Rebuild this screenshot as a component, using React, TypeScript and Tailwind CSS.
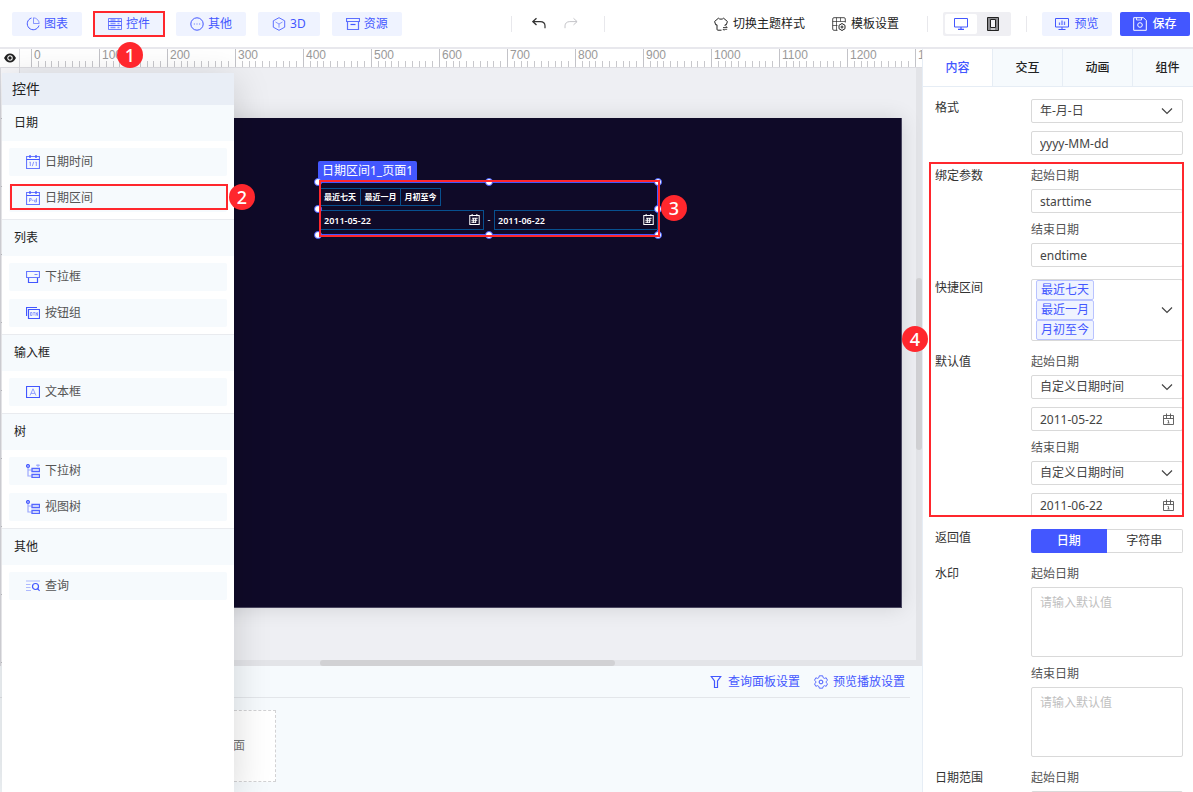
import React from 'react';
import clsx from 'clsx';

interface IconProps {
  className?: string;
}

interface WidgetItem {
  name: string;
  icon: React.FC<IconProps>;
  marker?: string;
}

interface WidgetGroup {
  title: string;
  items: WidgetItem[];
}

const Svg: React.FC<React.PropsWithChildren<IconProps>> = ({ className = 'size-3.5', children }) => (
  <svg viewBox="0 0 14 14" fill="none" stroke="currentColor" strokeWidth="1" className={clsx('shrink-0', className)} aria-hidden="true">
    {children}
  </svg>
);

/* ---------- toolbar icons ---------- */

const PieIcon = () => (
  <Svg>
    <path d="M5.5 1A6 6 0 1 0 13 8.5" />
    <path d="M7.5.8v5.7h5.7A5.9 5.9 0 0 0 7.5.8Z" opacity=".6" />
  </Svg>
);

const ControlsIcon = () => (
  <Svg>
    <path d="M.5 4.5v-3h13v3zM.5 8.5v-4h13v4zM.5 12.5v-4h13v4z" opacity=".75" />
    <path d="M2.5 3h5M2.5 6.5h5M2.5 10.5h5M9.5 3h2M9.5 6.5h2M9.5 10.5h2" strokeWidth="1.5" opacity=".6" />
  </Svg>
);

const MoreIcon = () => (
  <Svg>
    <circle cx="7" cy="7" r="6.2" />
    <path d="M3.8 7h1.2M6.4 7h1.2M9 7h1.2" opacity=".7" />
  </Svg>
);

const CubeIcon = () => (
  <Svg>
    <path d="M7 .7 12.7 3.8v6.4L7 13.3 1.3 10.2V3.8z" opacity=".85" />
    <path d="M3.5 5 7 7l3.5-2M7 7v3.7" opacity=".6" />
  </Svg>
);

const ArchiveIcon = () => (
  <Svg>
    <path d="M.5 1.5h13v3H.5zM1.500 4.500v8h11v-8" strokeWidth="1.200" opacity=".85" />
    <path d="M4.500 7.500h5" strokeWidth="1.200" />
  </Svg>
);

const UndoIcon = () => (
  <Svg>
    <path d="M4.500 1.300.9 4.600l3.600 3.300" strokeWidth="1.300" />
    <path d="M1 4.600h7.200c3 0 4.800 1.800 4.800 4.200v2.400" strokeWidth="1.200" />
  </Svg>
);

const RedoIcon = () => (
  <Svg>
    <path d="m9.500 1.300 3.600 3.300-3.600 3.300M13 4.600H5.800C2.800 4.600 1 6.400 1 8.800v2.400" />
  </Svg>
);

const ShirtIcon = () => (
  <Svg>
    <path d="M7.500 13.200H3.900a.9.900 0 0 1-.9-.9V7.800H1.700L.6 4.500 4.400 1.200c1 1.300 4.200 1.300 5.200 0l3.800 3.300-1.100 3.300H11v1" />
    <path d="M9 10.500h4.200l-1.200-1.300M13.200 12.300H9l1.200 1.300" opacity=".8" />
  </Svg>
);

const TemplateIcon = () => (
  <Svg>
    <path d="M5.500 13.300H2A1.300 1.300 0 0 1 .7 12V2A1.300 1.300 0 0 1 2 .7h10A1.300 1.300 0 0 1 13.300 2v3.500" opacity=".8" />
    <path d="M.7 4.500h12.600M.7 8.500h4.800M4.500.7v12.600M8.500.7v3.800" opacity=".65" />
    <path d="m10 6.500 3 1.800v3.400l-3 1.800-3-1.800V8.300z" />
    <circle cx="10" cy="10" r="1" />
  </Svg>
);

const MonitorIcon = () => (
  <Svg>
    <path d="M.5 1.500h13v8.500H.5z" />
    <path d="M7 10v2M4 12.300h6" strokeWidth="1.200" />
  </Svg>
);

const PhoneIcon = () => (
  <Svg>
    <path d="M1.500.5h11v13h-11z" fill="#8c8c90" />
    <path d="M4.500 2.500h5v8h-5z" fill="#f4f4f7" />
    <path d="M5 12h4" stroke="#fff" />
  </Svg>
);

const PreviewIcon = () => (
  <Svg>
    <path d="M.5 1.500h13v8.500H.5zM7 10v2M3.500 12.500h7" />
    <path d="M4.500 5.500V8M7 3.500V8M9.500 4.500V8" strokeWidth="1.300" opacity=".8" />
  </Svg>
);

const SaveIcon = () => (
  <Svg>
    <path d="M.7.7h9.800l2.800 2.800v9.800H.7z" />
    <path d="M3.500.7v2.300h5V.7" opacity=".8" />
    <circle cx="7" cy="8" r="2.300" />
  </Svg>
);

/* ---------- widget icons ---------- */

const CalendarBase: React.FC<React.PropsWithChildren> = ({ children }) => (
  <Svg>
    <path d="M.5 1.500h13v12H.5z" strokeWidth="1.200" opacity=".8" />
    <path d="M.5 4.500h13" />
    <path d="M4 0v3M10 0v3" strokeWidth="1.300" />
    {children}
  </Svg>
);

const DateTimeIcon = () => (
  <CalendarBase>
    <path d="M3.500 7.200 4.300 7v4M7.700 6.800l-1.400 4.400M9.500 7.200l.8-.2v4" opacity=".6" />
  </CalendarBase>
);

const DateRangeIcon = () => (
  <CalendarBase>
    <path d="M3.500 11V7.500h1.700v1.700H3.500M6 9.300h1.500M10.500 7v4H8.700V9h1.800" opacity=".55" />
  </CalendarBase>
);

const DropdownIcon = () => (
  <Svg>
    <path d="M.5 1.500h13v6H.5z" strokeWidth="1.200" opacity=".8" />
    <path d="M2.500 8v4.500h9V8" strokeWidth="1.200" />
    <path d="M8.500 4.500h3" opacity=".7" />
  </Svg>
);

const ButtonGroupIcon = () => (
  <Svg>
    <path d="M.5 10V1.500H11" strokeWidth="1.200" />
    <path d="M2.500 3.500h11v9h-11z" strokeWidth="1.200" />
    <path d="M4.500 6.500H6v3H4.500zM7.300 6.500H9M8 6.500v3M10 10V6.500l1.500 3V6.200" opacity=".5" />
  </Svg>
);

const TextBoxIcon = () => (
  <Svg>
    <path d="M.5 1.500h13v11H.5z" strokeWidth="1.200" />
    <path d="M4 10.500 7 3.800l3 6.700M5.200 8.400h3.600" opacity=".55" />
  </Svg>
);

const TreeShape = () => (
  <>
    <circle cx="2" cy="2" r="1.400" strokeWidth="1.300" />
    <path d="M2 3.500V12h3.500M2 6h3.500" strokeWidth="1.200" opacity=".5" />
    <path d="M6 4.500h7.500v3H6zM6 10.500h7.500v3H6z" strokeWidth="1.300" opacity=".9" />
  </>
);

const TreeIcon = () => (
  <Svg>
    <TreeShape />
  </Svg>
);

const DropTreeIcon = () => (
  <Svg>
    <TreeShape />
    <path d="M10.500 1h3L12 2.500z" opacity=".55" />
  </Svg>
);

const QueryIcon = () => (
  <Svg>
    <path d="M0 2h14M0 5.500h4.500M0 8.500h4.500M0 11.500h5" strokeWidth="1.200" opacity=".4" />
    <circle cx="9.500" cy="7.500" r="3" strokeWidth="1.200" />
    <path d="m11.600 9.700 2 2.200" strokeWidth="1.200" />
  </Svg>
);

const FilterIcon = () => (
  <Svg>
    <path d="M2.300 1.500h9.400L8.500 6v6.500h-3V6z" strokeWidth="1.200" />
  </Svg>
);

const GearIcon = () => (
  <Svg>
    <path d="m5.300.8-.4 1.800-1.300.8-1.800-.6L.5 5.300l1.300 1.100v1.400L.5 8.800l1.300 2.500 1.800-.6 1.300.8.400 1.700h3.400l.4-1.700 1.300-.8 1.800.6 1.300-2.500-1.300-1.100V6.400l1.300-1.100-1.300-2.500-1.800.6-1.300-.8L8.700.8z" opacity=".85" />
    <circle cx="7" cy="7" r="1.900" />
  </Svg>
);

const FieldCalendarIcon: React.FC<IconProps> = ({ className }) => (
  <Svg className={className}>
    <path d="M2.500 3.500h10v9h-10zM2.500 6.500h10M5.500 1.500v5M9.500 1.500v5" opacity=".9" />
    <path d="M6.500 8.500h1v2.500M6.500 11h2" opacity=".8" />
  </Svg>
);

const GridCalendarIcon: React.FC<IconProps> = ({ className }) => (
  <Svg className={className}>
    <path d="M1 2h12v11.300H1z" strokeWidth="1.300" />
    <path d="M4 0v3M10 0v3M4 5.500h7M3 8h7.500M3 10.500h5.500M5.500 5v6.500M8.500 5v6.500" strokeWidth="1.300" />
  </Svg>
);

const ChevronIcon: React.FC<IconProps> = ({ className }) => (
  <Svg className={className}>
    <path d="m2 4.500 5 5 5-5" strokeWidth="1.200" />
  </Svg>
);

const EyeIcon = () => (
  <Svg className="size-3">
    <path d="M0 7c2-3.600 4.300-5.200 7-5.200S12 3.400 14 7c-2 3.600-4.300 5.200-7 5.200S2 10.600 0 7Z" fill="currentColor" stroke="none" />
    <circle cx="7" cy="7" r="2.600" stroke="#fff" strokeWidth="1.200" />
  </Svg>
);

/* ---------- data ---------- */

const toolbar = [
  { name: '图表', icon: PieIcon },
  { name: '控件', icon: ControlsIcon, marker: '1' },
  { name: '其他', icon: MoreIcon },
  { name: '3D', icon: CubeIcon },
  { name: '资源', icon: ArchiveIcon },
];

const widgetGroups: WidgetGroup[] = [
  {
    title: '日期',
    items: [
      { name: '日期时间', icon: DateTimeIcon },
      { name: '日期区间', icon: DateRangeIcon, marker: '2' },
    ],
  },
  {
    title: '列表',
    items: [
      { name: '下拉框', icon: DropdownIcon },
      { name: '按钮组', icon: ButtonGroupIcon },
    ],
  },
  { title: '输入框', items: [{ name: '文本框', icon: TextBoxIcon }] },
  {
    title: '树',
    items: [
      { name: '下拉树', icon: DropTreeIcon },
      { name: '视图树', icon: TreeIcon },
    ],
  },
  { title: '其他', items: [{ name: '查询', icon: QueryIcon }] },
];

const quickRanges = ['最近七天', '最近一月', '月初至今'];
const rulerMarks = Array.from({ length: 14 }, (_, i) => i * 100);
const minorTicks = Array.from({ length: 9 }, (_, i) => Math.round((i + 1) * 6.8));

const handles = [
  '-left-1 -top-0.5',
  'left-1/2 -top-0.5 -translate-x-1/2',
  '-right-0.5 -top-0.5',
  '-left-1 top-1/2 -translate-y-1/2',
  '-right-0.5 top-1/2 -translate-y-1/2',
  '-left-1 -bottom-0.5',
  'left-1/2 -bottom-0.5 -translate-x-1/2',
  '-right-0.5 -bottom-0.5',
];

/* ---------- small parts ---------- */

const Marker: React.FC<{ value: string; className: string }> = ({ value, className }) => (
  <span className={clsx('absolute z-30 flex size-[26px] items-center justify-center rounded-full bg-[#ff272d] text-lg font-medium leading-none text-white', className)}>
    {value}
  </span>
);

const Divider = () => <span className="h-4 w-px bg-[#e8e8ec]" />;

const Toolbar = () => (
  <header className="relative z-20 flex h-[49px] shrink-0 items-center justify-between border-b-2 border-[#e8e8ed] bg-white pl-3 pr-[3px] pt-px">
    <nav className="flex gap-3">
      {toolbar.map(({ name, icon: Icon, marker }) => (
        <div key={name} className="relative">
          <button className="flex h-6 items-center gap-1 rounded-xs bg-[#eff3ff] px-3.5 text-[#4357ff]">
            <Icon />
            {name}
          </button>
          {marker && (
            <>
              <span className="pointer-events-none absolute -inset-px border-2 border-[#ff272d]" />
              <Marker value={marker} className="left-[23px] top-[30px]" />
            </>
          )}
        </div>
      ))}
    </nav>

    <div className="flex items-center">
      <Divider />
      <button aria-label="撤销" className="ml-5 text-[#333]"><UndoIcon /></button>
      <button aria-label="重做" className="ml-[18px] mr-[26px] text-[#c4c4c8]"><RedoIcon /></button>
      <Divider />
    </div>

    <div className="flex items-center">
      <button className="flex items-center gap-[5px] text-[#222]"><ShirtIcon />切换主题样式</button>
      <button className="ml-[27px] mr-7 flex items-center gap-[5px] text-[#222]"><TemplateIcon />模板设置</button>
      <Divider />
      <div className="mx-[15px] flex h-6 w-[68px] rounded-xs bg-[#efeff3] p-0.5">
        <button aria-label="桌面端" className="flex flex-1 items-center justify-center rounded-xs bg-white text-[#4357ff]"><MonitorIcon /></button>
        <button aria-label="移动端" className="flex flex-1 items-center justify-center text-[#222]"><PhoneIcon /></button>
      </div>
      <Divider />
      <button className="ml-[15px] flex h-6 w-[70px] items-center justify-center gap-[5px] rounded-xs bg-[#eff3ff] text-[#4357ff]"><PreviewIcon />预览</button>
      <button className="ml-2 flex h-6 w-[70px] items-center justify-center gap-[5px] rounded-xs bg-[#4357ff] font-medium text-white"><SaveIcon />保存</button>
    </div>
  </header>
);

const WidgetDrawer = () => (
  <aside className="absolute bottom-0 left-0.5 top-6 z-10 w-[232px] bg-white shadow-[0_8px_36px_rgba(0,0,0,0.16)]">
    <h2 className="flex h-8 items-center bg-[#e9eef6] px-2.5 text-sm text-[#222]">控件</h2>
    {widgetGroups.map((group, idx) => (
      <section key={group.title} className={clsx(idx > 0 && 'border-t border-[#e9ebef]')}>
        <h3 className="flex h-9 items-center bg-[#f6fafd] px-3 text-[#222]">{group.title}</h3>
        <ul className="flex flex-col gap-2 p-[7px]">
          {group.items.map(({ name, icon: Icon, marker }) => (
            <li key={name} className="relative">
              <button className="flex h-7 w-full items-center gap-[5px] rounded-xs bg-[#f6fafd] px-[17px] text-[#555]">
                <span className="text-[#4357ff]"><Icon /></span>
                {name}
              </button>
              {marker && (
                <>
                  <span className="pointer-events-none absolute -right-px bottom-0.5 left-px top-0 border-2 border-[#ff272d]" />
                  <Marker value={marker} className="-right-7 top-0" />
                </>
              )}
            </li>
          ))}
        </ul>
      </section>
    ))}
  </aside>
);

const HorizontalRuler = () => (
  <div className="flex h-[19px] shrink-0 border-b border-[#dcdce1] bg-white">
    <button aria-label="显示标尺" className="flex w-5 shrink-0 items-center justify-center border-r border-[#dcdce1] text-[#222]"><EyeIcon /></button>
    <div className="flex min-w-0 flex-1 overflow-hidden pl-[11px]">
      {rulerMarks.map((mark) => (
        <div key={mark} className="relative w-[68px] shrink-0 border-l border-[#c3c3c8]">
          <span className="block pl-0.5 font-['Liberation_Sans',sans-serif] leading-3 text-[#999]">{mark}</span>
          <svg className="absolute bottom-0 -left-px h-1.5 w-[68px]" shapeRendering="crispEdges" aria-hidden="true">
            {minorTicks.map((x) => <rect key={x} x={x} y="0" width="1" height="6" fill="#c8c8cc" />)}
          </svg>
        </div>
      ))}
    </div>
  </div>
);

const VerticalRuler = () => (
  <div className="w-5 shrink-0 overflow-hidden border-x border-[#dcdce1] bg-[#f7f7fa] pt-[50px]">
    {rulerMarks.slice(0, 12).map((mark) => (
      <div key={mark} className="h-[68px] border-t border-[#c3c3c8]" />
    ))}
  </div>
);

const CanvasDate: React.FC<{ label: string; value: string }> = ({ label, value }) => (
  <div className="relative min-w-0 flex-1">
    <input aria-label={label} defaultValue={value} className="block h-5 w-full border border-[#07508f] bg-transparent px-[3px] text-[9px] font-semibold text-white outline-none" />
    <GridCalendarIcon className="absolute right-1 top-1 size-[11px] text-white" />
  </div>
);

const RangeWidget = () => (
  <div className="absolute left-[286px] top-[43px] w-[342px]">
    <div className="flex h-[19px] w-fit items-center rounded-t-xs bg-[#4357ff] px-1 text-white">日期区间1_页面1</div>
    <div className="relative h-[57px] px-0.5 pt-2">
      <span className="absolute inset-px border-2 border-[#4357ff]" />
      <div className="relative flex w-fit border-y border-r border-[#07508f]">
        {quickRanges.map((range, i) => (
          <button key={range} className={clsx('h-4 w-10 text-[8px] font-bold text-white', i > 0 && 'border-l border-[#07508f]')}>{range}</button>
        ))}
      </div>
      <div className="relative mt-1 flex items-center">
        <CanvasDate label="起始" value="2011-05-22" />
        <span className="w-2.5 text-center text-[9px] text-white">-</span>
        <CanvasDate label="结束" value="2011-06-22" />
      </div>
      {handles.map((pos) => (
        <span key={pos} className={clsx('absolute size-2 rounded-full border border-[#4357ff] bg-white', pos)} />
      ))}
      <span className="pointer-events-none absolute inset-y-0 left-px right-0 border-2 border-[#ff272d]" />
      <Marker value="3" className="-right-[27px] top-[15px]" />
    </div>
  </div>
);

const Stage = () => (
  <div className="flex min-h-0 flex-1">
    <VerticalRuler />
    <div className="flex min-w-0 flex-1 flex-col">
      <div className="flex min-h-0 flex-1">
        <div className="flex min-w-0 flex-1 bg-[#eeeff3] pb-[52px] pl-3 pr-3.5 pt-[50px]">
          <div className="relative flex-1 border-b border-r border-[#4a4760] bg-[#0f0a28] shadow-[0_0_20px_rgba(0,0,0,0.12)]">
            <RangeWidget />
          </div>
        </div>
        <div className="w-1.5 shrink-0 bg-[#e3e4e8] pt-[210px]">
          <div className="h-[172px] rounded-full bg-[#d1d1d4]" />
        </div>
      </div>
      <div className="h-1.5 shrink-0 bg-[#e3e4e8] pl-[300px]">
        <div className="h-full w-[295px] rounded-full bg-[#d1d1d4]" />
      </div>
    </div>
  </div>
);

const PagesBar = () => (
  <div className="h-[126px] shrink-0 bg-[#f6fafd] pr-3">
    <div className="flex h-8 items-center justify-end gap-3.5 border-b border-[#e3e6ea] pr-[5px] pt-px text-[#4357ff]">
      <button className="flex items-center gap-[5px]"><FilterIcon />查询面板设置</button>
      <button className="flex items-center gap-[5px]"><GearIcon />预览播放设置</button>
    </div>
    <button className="ml-[190px] mt-3 flex h-[72px] w-[86px] items-center justify-center border border-dashed border-[#d2d2d4] bg-white text-[#777]">页面</button>
  </div>
);

/* ---------- property panel ---------- */

const fieldClass = 'block h-6 w-full rounded-xs border border-[#d9d9d9] bg-white px-2 text-xs text-[#444] outline-none';

const Row: React.FC<React.PropsWithChildren<{ label: string }>> = ({ label, children }) => (
  <div className="flex">
    <div className="w-24 shrink-0 leading-[18px] text-[#333]">{label}</div>
    <div className="flex min-w-0 flex-1 flex-col gap-2">{children}</div>
  </div>
);

const Labelled: React.FC<React.PropsWithChildren<{ label: string; id: string }>> = ({ label, id, children }) => (
  <div>
    <label htmlFor={id} className="mb-1 block leading-[18px] text-[#555]">{label}</label>
    {children}
  </div>
);

const SelectField: React.FC<{ value: string; id?: string; label?: string }> = ({ value, id, label }) => (
  <div className="relative">
    <select id={id} aria-label={label} defaultValue={value} className={clsx(fieldClass, 'appearance-none')}>
      <option>{value}</option>
    </select>
    <ChevronIcon className="pointer-events-none absolute right-[9px] top-[5px] size-3.5 text-[#444]" />
  </div>
);

const DateField: React.FC<{ value: string; label: string }> = ({ value, label }) => (
  <div className="relative">
    <input aria-label={label} defaultValue={value} className={fieldClass} />
    <FieldCalendarIcon className="pointer-events-none absolute right-2 top-[5px] size-3.5 text-[#555]" />
  </div>
);

const PropertyPanel = () => (
  <aside className="relative z-10 w-[271px] shrink-0 border-l border-[#e6edf5] bg-white">
    <div className="flex overflow-hidden">
      {['内容', '交互', '动画', '组件'].map((tab, i) => (
        <button
          key={tab}
          className={clsx(
            'h-[38px] w-[70px] shrink-0 border-b border-r border-[#e6edf5] font-medium',
            i === 0 ? 'bg-white text-[#4357ff]' : 'bg-[#f6fafd] text-[#222]'
          )}
        >
          {tab}
        </button>
      ))}
    </div>

    <div className="flex flex-col gap-3 pb-3 pl-3 pr-2.5 pt-3">
      <Row label="格式">
        <SelectField value="年-月-日" label="格式" />
        <input aria-label="格式串" defaultValue="yyyy-MM-dd" className={fieldClass} />
      </Row>

      <div className="relative flex flex-col gap-3">
        <Row label="绑定参数">
          <Labelled label="起始日期" id="bind-start"><input id="bind-start" defaultValue="starttime" className={fieldClass} /></Labelled>
          <Labelled label="结束日期" id="bind-end"><input id="bind-end" defaultValue="endtime" className={fieldClass} /></Labelled>
        </Row>
        <Row label="快捷区间">
          <button className="flex w-full items-center justify-between rounded-xs border border-[#d9d9d9] bg-white pl-1 pr-2 text-[#444]">
            <span className="flex flex-col">
              {quickRanges.map((range) => (
                <span key={range} className="h-5 rounded-xs border border-[#b9c3ff] bg-[#eff3ff] px-1 leading-[18px] text-[#4357ff]">{range}</span>
              ))}
            </span>
            <ChevronIcon />
          </button>
        </Row>
        <Row label="默认值">
          <Labelled label="起始日期" id="default-start"><SelectField id="default-start" value="自定义日期时间" /></Labelled>
          <DateField label="默认起始日期" value="2011-05-22" />
          <Labelled label="结束日期" id="default-end"><SelectField id="default-end" value="自定义日期时间" /></Labelled>
          <DateField label="默认结束日期" value="2011-06-22" />
        </Row>
        <span className="pointer-events-none absolute -left-1.5 -right-px -top-[5px] bottom-0 border-2 border-[#ff272d]" />
        <Marker value="4" className="-left-[33px] top-[159px]" />
      </div>

      <Row label="返回值">
        <div className="flex h-6">
          <button className="flex-1 rounded-l-xs bg-[#4357ff] font-medium text-white">日期</button>
          <button className="flex-1 rounded-r-xs border border-l-0 border-[#d9d9d9] text-[#333]">字符串</button>
        </div>
      </Row>
      <Row label="水印">
        {['起始日期', '结束日期'].map((label) => (
          <Labelled key={label} label={label} id={`watermark-${label}`}>
            <textarea
              id={`watermark-${label}`}
              placeholder="请输入默认值"
              className="block h-[70px] w-full resize-none rounded-xs border border-[#d9d9d9] px-2 py-1.5 leading-[18px] outline-none placeholder:text-[#bfbfbf]"
            />
          </Labelled>
        ))}
      </Row>
      <Row label="日期范围">
        <Labelled label="起始日期" id="range-start"><input id="range-start" className={fieldClass} /></Labelled>
      </Row>
    </div>
  </aside>
);

export default function App() {
  return (
    <div className="flex h-screen flex-col overflow-hidden bg-white font-['Noto_Sans','Noto_Sans_CJK_SC',sans-serif] text-xs">
      <Toolbar />
      <main className="relative flex min-h-0 flex-1">
        <div className="flex min-w-0 flex-1 flex-col">
          <HorizontalRuler />
          <Stage />
          <PagesBar />
        </div>
        <WidgetDrawer />
        <PropertyPanel />
      </main>
    </div>
  );
}
